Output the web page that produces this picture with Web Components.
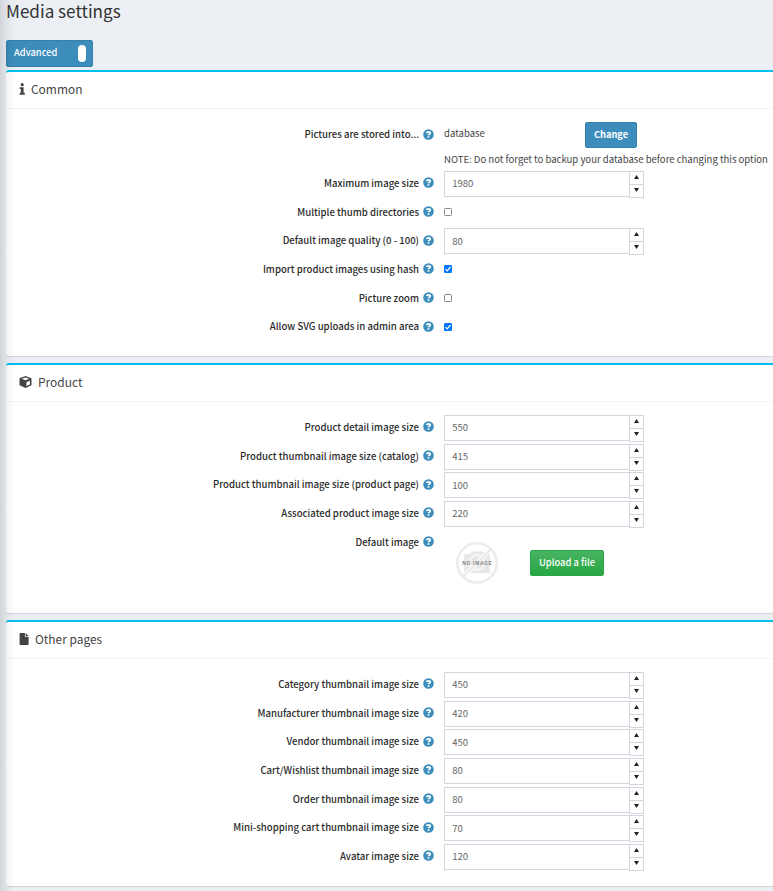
<!DOCTYPE html>
<html lang="en"><head><meta charset="utf-8"><title>Media settings</title>
<style>
html,body{margin:0;height:100%;overflow:hidden}
body{font-family:"Noto Sans CJK SC","Noto Sans",sans-serif;font-size:9.55px;line-height:14px;color:#444;background:#ecf0f5}
</style></head><body>
<settings-page>
 <mode-toggle>Advanced</mode-toggle>
 <settings-card heading="Common" icon="info" style="--h:286px">
  <setting-row label="Pictures are stored into..." style="--rh:49px;--pad:5px"><database-option></database-option></setting-row>
  <setting-row label="Maximum image size"><number-box value="1980"></number-box></setting-row>
  <setting-row label="Multiple thumb directories"><check-box></check-box></setting-row>
  <setting-row label="Default image quality (0 - 100)"><number-box value="80"></number-box></setting-row>
  <setting-row label="Import product images using hash"><check-box checked></check-box></setting-row>
  <setting-row label="Picture zoom"><check-box></check-box></setting-row>
  <setting-row label="Allow SVG uploads in admin area"><check-box checked></check-box></setting-row>
 </settings-card>
 <settings-card heading="Product" icon="cube" style="--h:250px">
  <setting-row label="Product detail image size"><number-box value="550"></number-box></setting-row>
  <setting-row label="Product thumbnail image size (catalog)"><number-box value="415"></number-box></setting-row>
  <setting-row label="Product thumbnail image size (product page)"><number-box value="100"></number-box></setting-row>
  <setting-row label="Associated product image size"><number-box value="220"></number-box></setting-row>
  <setting-row label="Default image" style="--rh:70px"><image-upload></image-upload></setting-row>
 </settings-card>
 <settings-card heading="Other pages" icon="file" style="--h:266px">
  <setting-row label="Category thumbnail image size"><number-box value="450"></number-box></setting-row>
  <setting-row label="Manufacturer thumbnail image size"><number-box value="420"></number-box></setting-row>
  <setting-row label="Vendor thumbnail image size"><number-box value="450"></number-box></setting-row>
  <setting-row label="Cart/Wishlist thumbnail image size"><number-box value="80"></number-box></setting-row>
  <setting-row label="Order thumbnail image size"><number-box value="80"></number-box></setting-row>
  <setting-row label="Mini-shopping cart thumbnail image size"><number-box value="70"></number-box></setting-row>
  <setting-row label="Avatar image size"><number-box value="120"></number-box></setting-row>
 </settings-card>
</settings-page>
<script>
const define=(name,render)=>customElements.define(name,class extends HTMLElement{
  constructor(){super();this.attachShadow({mode:'open'});}
  connectedCallback(){this.shadowRoot.innerHTML=`<style>*{box-sizing:border-box}</style>`+render(this);}
});
const icons={
 info:`<svg width="6" height="12" viewBox="0 0 6 12" fill="#444"><circle cx="3.200" cy="1.700" r="1.600"/><path d="M.7 4.200h3.900v5.600h1.200v1.900H.7V9.800h1.100V6.100H.7z"/></svg>`,
 cube:`<svg width="13" height="12" viewBox="0 0 13 12"><path fill="#444" d="M6.500 0l5.400 2q.6.200.6.800v5.900q0 .6-.5.900L6.500 12 1 9.600q-.5-.3-.5-.9V2.800q0-.6.6-.8z"/><path fill="#fff" d="M6.500 1.500l3.800 1.300-3.800 1.500-3.800-1.500zM7.400 6.200l3.500-1.500v3.700L7.400 10z"/></svg>`,
 file:`<svg width="10" height="12" viewBox="0 0 10 12" fill="#444"><path d="M1.300 0h4.600v3.200q0 .6.600.600h3.100v7.600q0 .6-.6.600H1.200q-.6 0-.6-.6V.6q0-.6.700-.6z"/><path d="M6.600 0l3 3h-3z"/></svg>`
};
define('settings-page',()=>`<style>
:host{display:flex;flex-direction:column;position:relative;height:891px;padding-left:6px;overflow:hidden}
h1{flex:none;margin:0;font-size:17.1px;font-weight:400;line-height:22px;height:40px;color:#333}
.shade{position:absolute;left:0;top:0;bottom:0;width:18px;pointer-events:none;background:linear-gradient(90deg,rgba(0,0,0,.115),rgba(0,0,0,.055) 32%,rgba(0,0,0,.018) 62%,transparent)}
</style><h1>Media settings</h1><slot></slot><div class="shade"></div>`);
define('mode-toggle',()=>`<style>
:host{display:flex;box-sizing:border-box;align-items:center;justify-content:space-between;flex:none;width:87px;height:27px;margin-bottom:3px;padding:0 6px 0 7px;border:1px solid #367fa9;border-radius:2px;background:#3c8dbc;color:#fff;font-weight:500;font-size:9.3px}
span{margin-top:-3px}
i{width:8px;height:17px;border-radius:4px;background:#fff}
</style><span><slot></slot></span><i></i>`);
define('settings-card',e=>`<style>
:host{display:flex;box-sizing:border-box;flex-direction:column;flex:none;width:774px;height:var(--h);margin-bottom:7px;background:#fff;border-top:2px solid #00c0ef;border-radius:3px;box-shadow:0 1px 1px rgba(0,0,0,.12)}
header{display:flex;align-items:center;gap:6px;height:37px;padding:0 0 1px 13px;border-bottom:1px solid #f4f4f4;font-size:11.95px;line-height:18px}
header span{margin-top:-2px}
svg{display:block;margin-top:-1px}
.body{display:flex;flex-direction:column;padding-top:13px}
</style><header>${icons[e.getAttribute('icon')]}<span>${e.getAttribute('heading')}</span></header><div class="body"><slot></slot></div>`);
define('setting-row',e=>`<style>
:host{display:grid;grid-template-columns:428px 1fr;column-gap:10px;height:var(--rh,28.667px)}
.label{display:flex;justify-content:flex-end;align-items:center;gap:4px;height:14px;margin-top:var(--pad,4.900px);font-weight:500;font-size:9.58px;color:#2b2b2b;white-space:nowrap}
svg{display:block;width:11px;height:11px}
</style><div class="label"><span>${e.getAttribute('label')}</span><svg viewBox="0 0 11 11"><circle cx="5.5" cy="5.5" r="5.3" fill="#3c8dbc"/><path d="M3.600 4.100Q3.900 2.800 5.500 2.800q1.800 0 1.800 1.300 0 .7-.9 1.100-.9.4-.9 1.100" fill="none" stroke="#fff" stroke-width="1.700"/><path fill="#fff" d="M4.600 7.200h1.700v1.600H4.600z"/></svg></div><slot></slot>`);
define('number-box',e=>`<style>
:host{display:flex;width:200px;height:27px}
.field{width:186px;height:26px;border:1px solid #d2d6de;padding:4.300px 7.200px;line-height:14px;color:#666}
.spin{display:flex;flex-direction:column;width:15px;height:27px;margin-left:-1px;border:1px solid #d2d6de;background:#fff}
.spin span{display:flex;flex:1;align-items:center;justify-content:center}
.spin span+span{border-top:1px solid #d2d6de}
svg{width:5px;height:4px;margin-top:-2px}
</style><div class="field">${e.getAttribute('value')}</div><div class="spin"><span><svg viewBox="0 0 5 4"><path d="M2.500 0L5 4H0z" fill="#222"/></svg></span><span><svg viewBox="0 0 5 4"><path d="M0 0h5L2.500 4z" fill="#222"/></svg></span></div>`);
define('check-box',e=>{const on=e.hasAttribute('checked');return `<style>
:host{display:block;padding-top:8.500px}
svg{display:block}
</style><svg width="8" height="8" viewBox="0 0 8 8">${on?'<rect width="8" height="8" rx="1.200" fill="#0075ff"/><path d="M1.500 4.200l1.700 1.700 3.300-3.900" fill="none" stroke="#fff" stroke-width="1.200"/>':'<rect x=".5" y=".5" width="7" height="7" rx=".8" fill="#fff" stroke="#8a8a8a"/>'}</svg>`});
define('database-option',()=>`<style>
:host{display:block;white-space:nowrap}
.top{display:grid;grid-template-columns:141px 52px;height:27px}
.top span{padding-top:4px}
button{height:26px;padding:0 0 2px;border:1px solid #367fa9;border-radius:2px;background:#3c8dbc;color:#fff;font:700 9.25px/14px "Noto Sans CJK SC",sans-serif}
.note{margin-top:3px}
</style><div class="top"><span>database</span><button>Change</button></div><div class="note">NOTE: Do not forget to backup your database before changing this option</div>`);
define('image-upload',()=>`<style>
:host{display:flex;align-items:flex-start;padding:12px 0 0 12px}
svg{display:block;width:42px;height:42px}
button{width:74px;height:26px;margin:8px 0 0 32px;padding:0 0 2px;border:1px solid #2ea44a;border-radius:2px;background:linear-gradient(#48b461,#28a745);color:#fff;font:500 9.4px/14px "Noto Sans CJK SC",sans-serif}
</style><svg viewBox="0 0 42 42"><path fill="#e8e8e8" d="M9.500 12h4.500l1.500-2.500h12L29 12h3.500q1.500 0 1.500 1.500v16q0 1.500-1.500 1.500h-23Q8 31 8 29.500v-16Q8 12 9.500 12z"/><circle cx="21" cy="20.500" r="7.500" fill="none" stroke="#f6f6f6" stroke-width="2"/><path d="M7 35L35 7" stroke="#fff" stroke-width="4"/><circle cx="21" cy="21" r="19.700" fill="none" stroke="#ebebeb" stroke-width="2.400"/><path d="M7.500 34.500l27-27" stroke="#ebebeb" stroke-width="2.400"/><text x="6.300" y="23.300" font-family="Liberation Sans, sans-serif" font-size="4.800" font-weight="700" fill="#808080" textLength="29.500">NO IMAGE</text></svg><button>Upload a file</button>`);
</script></body></html>
